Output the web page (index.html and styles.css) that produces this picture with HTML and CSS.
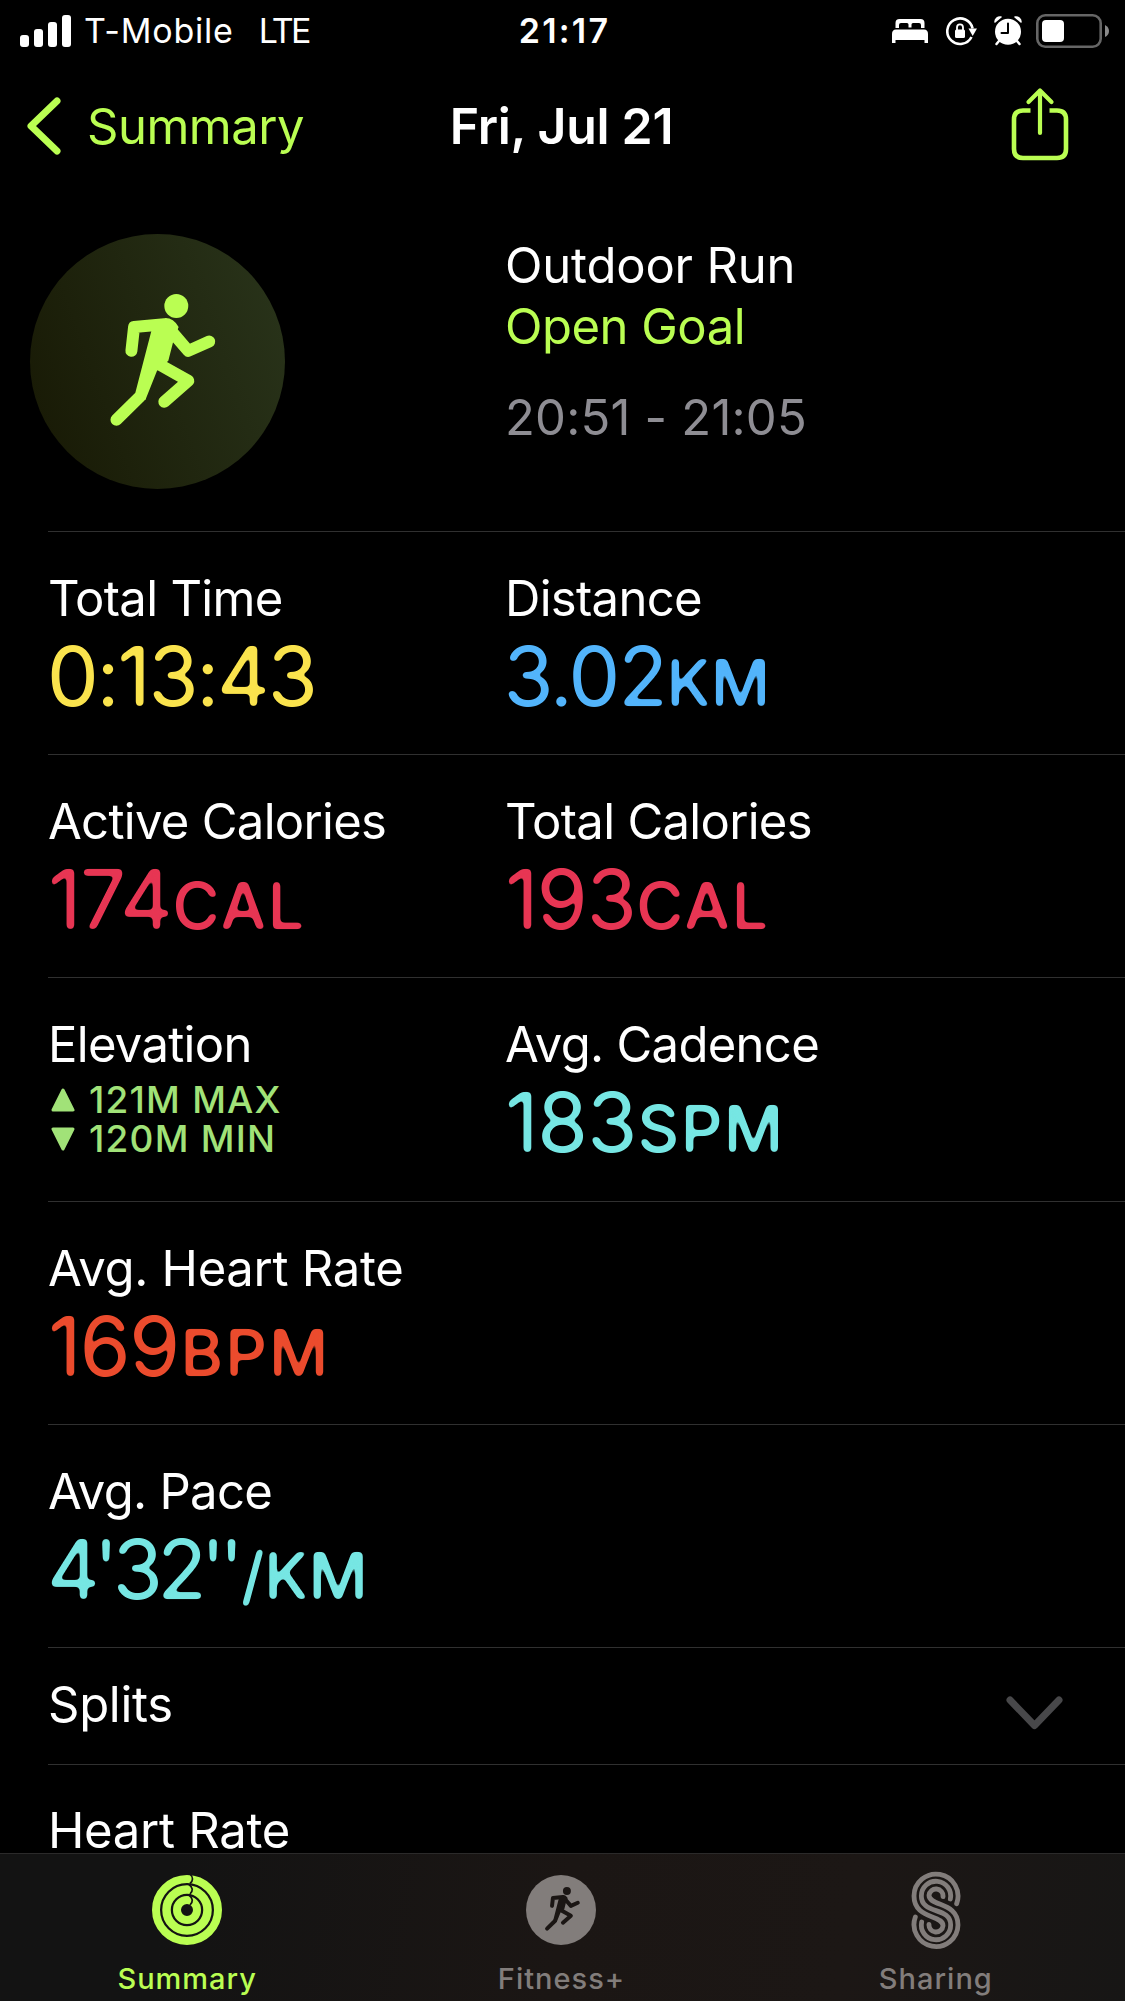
FILE: index.html
```
<!DOCTYPE html>
<html lang="en">
<head>
    <meta charset="UTF-8">
    <meta name="viewport" content="width=device-width, initial-scale=1.0">
    <title>Fri, Jul 21</title>
    <link rel="stylesheet" href="styles.css">
</head>
<body>
    <!-- shared shapes -->
    <svg class="defs" width="0" height="0">
        <symbol id="runner" viewBox="260 210 336 412">
            <g fill="none" stroke="currentColor" stroke-width="36" stroke-linecap="round" stroke-linejoin="round">
                <path d="M333 390L341 318L432 310"/>
                <path d="M448 325L504 390L567 362"/>
                <path d="M415 430L504 480L432 543"/>
                <path d="M359 527L288 597"/>
            </g>
            <path fill="currentColor" d="M393 330L345 515L375 538L410 450L444 420L460 357L475 318Q460 291 435 291Z"/>
            <circle cx="468" cy="255" r="36" fill="currentColor"/>
        </symbol>
        <!-- softens the corners of the big numbers -->
        <filter id="rounded" x="-5%" y="-5%" width="110%" height="110%" color-interpolation-filters="sRGB">
            <feGaussianBlur stdDeviation="2"/>
            <feComponentTransfer>
                <feFuncA type="linear" slope="6" intercept="-2.4"/>
            </feComponentTransfer>
        </filter>
    </svg>

    <div class="status-bar">
        <div class="status-left">
            <svg class="signal" viewBox="0 0 51 32" fill="#fff">
                <rect x="0" y="20" width="9" height="12" rx="3"/>
                <rect x="14" y="14" width="9" height="18" rx="3"/>
                <rect x="28" y="7" width="9" height="25" rx="3"/>
                <rect x="42" y="0" width="9" height="32" rx="3"/>
            </svg>
            <span class="carrier">T-Mobile</span>
            <span class="network">LTE</span>
        </div>
        <div class="clock">21:17</div>
        <div class="status-icons">
            <svg width="36" height="24" viewBox="0 0 36 24" fill="#fff">
                <path d="M3.5 9V4Q3.5 0 7.500 0H28.500Q32.500 0 32.500 4V9H29V6Q29 4 27 4H21Q19.500 4 19.500 5.500V8.500H16.500V5.500Q16.500 4 15 4H9Q7 4 7 6V9Z"/>
                <path d="M4 10.500H32Q36 10.500 36 15V24H32.500V21H3.500V24H0V15Q0 10.500 4 10.500Z"/>
            </svg>
            <svg width="32" height="30" viewBox="0 0 32 30">
                <path d="M25.500 21A12.800 12.800 0 1 1 26.600 12.500" fill="none" stroke="#fff" stroke-width="2.600"/>
                <path d="M22.500 12.500H31L26.700 20Z" fill="#fff"/>
                <rect x="9" y="13.500" width="10" height="8.500" rx="1.500" fill="#fff"/>
                <path d="M11 14V11.500A3 3.200 0 0 1 17 11.500V14" fill="none" stroke="#fff" stroke-width="1.800"/>
            </svg>
            <svg width="28" height="30" viewBox="0 0 28 30">
                <path d="M1 6A5 5 0 0 1 7 1ZM27 6A5 5 0 0 0 21 1Z" fill="#fff" stroke="#fff" stroke-width="1.500" stroke-linejoin="round"/>
                <circle cx="14" cy="15.800" r="14.300" fill="#000"/>
                <circle cx="14" cy="15.800" r="13" fill="#fff"/>
                <path d="M5 25L2.500 28M23 25L25.500 28" stroke="#fff" stroke-width="2.500" stroke-linecap="round"/>
                <path d="M14 7.500V17H7.500" fill="none" stroke="#000" stroke-width="2" stroke-linecap="round" stroke-linejoin="round"/>
            </svg>
            <svg width="73" height="34" viewBox="0 0 73 34">
                <rect x="1.300" y="1.300" width="63.400" height="31.400" rx="8" fill="none" stroke="#666" stroke-width="2.600"/>
                <rect x="6" y="6" width="22" height="22" rx="4" fill="#fff"/>
                <path d="M69 11Q73 13 73 17T69 23Z" fill="#8a8a8a"/>
            </svg>
        </div>
    </div>

    <div class="nav">
        <a class="back" href="#">
            <svg width="34" height="58" viewBox="0 0 34 58">
                <path d="M30 4L4 29L30 54" fill="none" stroke="currentColor" stroke-width="7" stroke-linecap="round" stroke-linejoin="round"/>
            </svg>
            <span>Summary</span>
        </a>
        <h1>Fri, Jul 21</h1>
        <a class="share" href="#" aria-label="Share">
            <svg width="58" height="74" viewBox="0 0 58 74" fill="none" stroke="currentColor" stroke-width="4.600">
                <path d="M19.500 23.500H12Q3 23.500 3 32.500V62Q3 71 12 71H46Q55 71 55 62V32.500Q55 23.500 46 23.500H38.500"/>
                <path d="M29 46V4M17.500 15L29 3.500L40.500 15" stroke-width="4.200" stroke-linecap="round" stroke-linejoin="round"/>
            </svg>
        </a>
    </div>

    <div class="content">
        <div class="workout">
            <div class="workout-icon">
                <svg width="112" height="137"><use href="#runner"/></svg>
            </div>
            <div class="workout-info">
                <p>Outdoor Run</p>
                <p class="goal">Open Goal</p>
                <p class="period">20:51 - 21:05</p>
            </div>
        </div>

        <div class="row">
            <div class="stat">
                <h2>Total Time</h2>
                <p class="value time">0:13:43</p>
            </div>
            <div class="stat">
                <h2>Distance</h2>
                <p class="value distance">3.02<span class="unit km">KM</span></p>
            </div>
        </div>
        <div class="row">
            <div class="stat">
                <h2>Active Calories</h2>
                <p class="value calories">174<span class="unit">CAL</span></p>
            </div>
            <div class="stat">
                <h2>Total Calories</h2>
                <p class="value calories">193<span class="unit">CAL</span></p>
            </div>
        </div>
        <div class="row">
            <div class="stat">
                <h2>Elevation</h2>
                <div class="elevation">
                    <p>
                        <svg width="24" height="24" viewBox="0 0 24 24"><path d="M12 2L22 22H2Z" fill="currentColor" stroke="currentColor" stroke-width="3" stroke-linejoin="round"/></svg>
                        <span>121M MAX</span>
                    </p>
                    <p>
                        <svg width="24" height="24" viewBox="0 0 24 24"><path d="M2 2H22L12 22Z" fill="currentColor" stroke="currentColor" stroke-width="3" stroke-linejoin="round"/></svg>
                        <span>120M MIN</span>
                    </p>
                </div>
            </div>
            <div class="stat">
                <h2>Avg. Cadence</h2>
                <p class="value cadence">183<span class="unit">SPM</span></p>
            </div>
        </div>
        <div class="row">
            <div class="stat">
                <h2 class="wide">Avg. Heart Rate</h2>
                <p class="value heart">169<span class="unit">BPM</span></p>
            </div>
        </div>
        <div class="row">
            <div class="stat">
                <h2>Avg. Pace</h2>
                <p class="value pace">4'32''<span class="unit km">/KM</span></p>
            </div>
        </div>
        <div class="splits">
            <h2 class="wide">Splits</h2>
            <svg width="57" height="34" viewBox="0 0 57 34">
                <path d="M4 4L28.500 29.500L53 4" fill="none" stroke="#48484a" stroke-width="7" stroke-linecap="round" stroke-linejoin="round"/>
            </svg>
        </div>
        <div class="heart-rate">
            <h2 class="wide">Heart Rate</h2>
        </div>
    </div>

    <div class="tab-bar">
        <a class="tab active" href="#">
            <svg width="70" height="80" viewBox="-35 -40 70 80" fill="none">
                <g stroke="currentColor">
                    <circle r="31" stroke-width="8"/>
                    <circle r="20.500" stroke-width="8.500"/>
                    <circle r="10" stroke-width="8"/>
                </g>
                <path d="M3 -36Q8 -31 3 -26.500M2 -25.500Q8 -21 3 -16M2 -15Q8 -10 3 -5" stroke="#131313" stroke-width="1.700"/>
            </svg>
            <span>Summary</span>
        </a>
        <a class="tab" href="#">
            <svg width="70" height="80" viewBox="-35 -40 70 80">
                <circle r="35" fill="currentColor"/>
                <use class="cutout" href="#runner" x="-17" y="-24" width="37" height="45.500"/>
            </svg>
            <span>Fitness+</span>
        </a>
        <a class="tab" href="#">
            <svg width="50" height="80" viewBox="184 630 150 240" fill="none" stroke="currentColor" stroke-width="14.500" stroke-linecap="round">
                <path d="M321 731A66 66 0 1 0 193 708C193 748 222 761 246 770S280 785 280 797A21 21 0 1 1 238 793"/>
                <path d="M302 717A44 44 0 1 0 215 708C215 735 235 744 259 752S303 768 303 795A44 44 0 1 1 216 786"/>
                <path d="M280 710A21 21 0 1 0 238 706C238 718 248 724 272 733S325 755 325 795A66 66 0 1 1 197 771"/>
            </svg>
            <span>Sharing</span>
        </a>
    </div>
</body>
</html>
```
FILE: styles.css
```
* {
    margin: 0;
    padding: 0;
    box-sizing: border-box;
}

body {
    font-family: Inter, "Liberation Sans", sans-serif;
    background: #000;
    color: #fff;
    height: 2001px;
    display: flex;
    flex-direction: column;
    overflow: hidden;
    font-size: 49px;
    letter-spacing: -0.5px;
}

a {
    color: #bafe52;
    text-decoration: none;
}

svg {
    display: block;
    flex-shrink: 0;
}

.defs {
    position: absolute;
}

h1 {
    font-size: 50px;
    font-weight: 600;
    letter-spacing: -0.3px;
}

h2 {
    font-size: 49px;
    font-weight: 400;
    line-height: 60px;
    letter-spacing: -0.7px;
}

h2.wide {
    letter-spacing: -0.3px;
}

/* status bar */
.status-bar {
    height: 62px;
    flex-shrink: 0;
    display: grid;
    grid-template-columns: 1fr auto 1fr;
    align-items: center;
    padding: 0 16px 0 20px;
    font-size: 34px;
    line-height: 62px;
}

.status-left {
    display: flex;
    align-items: center;
}

.signal {
    width: 51px;
    height: 32px;
}

.carrier {
    margin-left: 13px;
    letter-spacing: 0.8px;
}

.network {
    margin-left: 25px;
    letter-spacing: -2.8px;
}

.clock {
    font-weight: 600;
    letter-spacing: 2.2px;
}

.status-icons {
    display: flex;
    justify-content: flex-end;
    align-items: center;
}

.status-icons svg + svg {
    margin-left: 18px;
}

.status-icons svg + svg + svg {
    margin-left: 16px;
}

.status-icons svg:last-child {
    margin-left: 14px;
}

/* navigation */
.nav {
    height: 128px;
    flex-shrink: 0;
    display: grid;
    grid-template-columns: 1fr auto 1fr;
    align-items: center;
    padding: 0 56px 0 27px;
}

.back {
    display: flex;
    align-items: center;
    gap: 26px;
}

.nav h1 {
    margin-left: 27px;
}

.share {
    justify-self: end;
    margin-bottom: 4px;
}

/* workout header */
.content {
    flex: 1;
    min-height: 0;
    overflow: hidden;
}

.workout {
    height: 341px;
    display: grid;
    grid-template-columns: 475px 1fr;
    padding: 44px 0 0 30px;
}

.workout-icon {
    width: 255px;
    height: 255px;
    border-radius: 50%;
    background: linear-gradient(70deg, #191b06 10%, #283219 90%);
    color: #bafe52;
    display: flex;
    align-items: center;
    justify-content: center;
    padding: 0 0 5px 10px;
}

.workout-info {
    padding-top: 1px;
    line-height: 61.300px;
    letter-spacing: -0.2px;
}

.goal {
    color: #bafe52;
    letter-spacing: -0.5px;
}

.period {
    color: #8e8d93;
    margin-top: 29px;
    letter-spacing: 0.2px;
}

/* stats */
.row {
    height: 223.200px;
    margin-left: 48px;
    padding: 37px 0 0 0;
    border-top: 1px solid #303030;
    display: grid;
    grid-template-columns: 457px 1fr;
}

.value {
    margin-top: 3px;
    font-size: 82px;
    line-height: 90px;
    letter-spacing: -1.500px;
    white-space: nowrap;
    filter: url(#rounded);
}

.unit {
    margin-left: 1px;
    font-size: 65px;
    font-weight: 500;
    line-height: 1;
    letter-spacing: 1.500px;
}

.unit.km {
    letter-spacing: -0.500px;
}

.time {
    margin-left: -1px;
    color: #fae34d;
    letter-spacing: -2.600px;
}

.distance {
    margin-left: -2px;
    color: #52b4fb;
    letter-spacing: -2.400px;
}

.calories {
    color: #e73553;
}

.cadence {
    color: #76e6e3;
    letter-spacing: -1.200px;
}

.heart {
    color: #eb4b2d;
}

.heart .unit {
    margin-left: 2px;
    letter-spacing: 2px;
}

.pace {
    margin-left: -1px;
    color: #76e6e3;
    letter-spacing: -6.100px;
}

.pace .unit {
    margin-left: 3px;
}

.elevation {
    margin: 5px 0 0 3px;
    color: #a1e278;
    font-size: 37px;
    font-weight: 500;
    line-height: 39px;
    letter-spacing: 1.200px;
}

.elevation p {
    display: flex;
    align-items: center;
    gap: 14px;
}

.splits {
    height: 117px;
    margin-left: 48px;
    padding: 27px 62px 0 0;
    border-top: 1px solid #303030;
    display: flex;
    justify-content: space-between;
    align-items: flex-start;
}

.splits svg {
    margin-top: 21px;
}

.heart-rate {
    margin-left: 48px;
    padding-top: 36px;
    border-top: 1px solid #303030;
}

/* tab bar */
.tab-bar {
    height: 148px;
    flex-shrink: 0;
    display: grid;
    grid-template-columns: repeat(3, 1fr);
    padding: 16px 2px 0 0;
    background: linear-gradient(100deg, #131313 15%, #1b1614 50%, #1c1715 75%, #171615 100%);
    border-top: 1px solid #2b2a2a;
}

.tab {
    display: flex;
    flex-direction: column;
    align-items: center;
    gap: 11px;
    color: #827d7b;
    font-size: 29px;
    font-weight: 500;
    line-height: 36px;
    letter-spacing: 1px;
}

.tab.active {
    color: #bafe52;
}

.cutout {
    color: #1b1614;
}
```
